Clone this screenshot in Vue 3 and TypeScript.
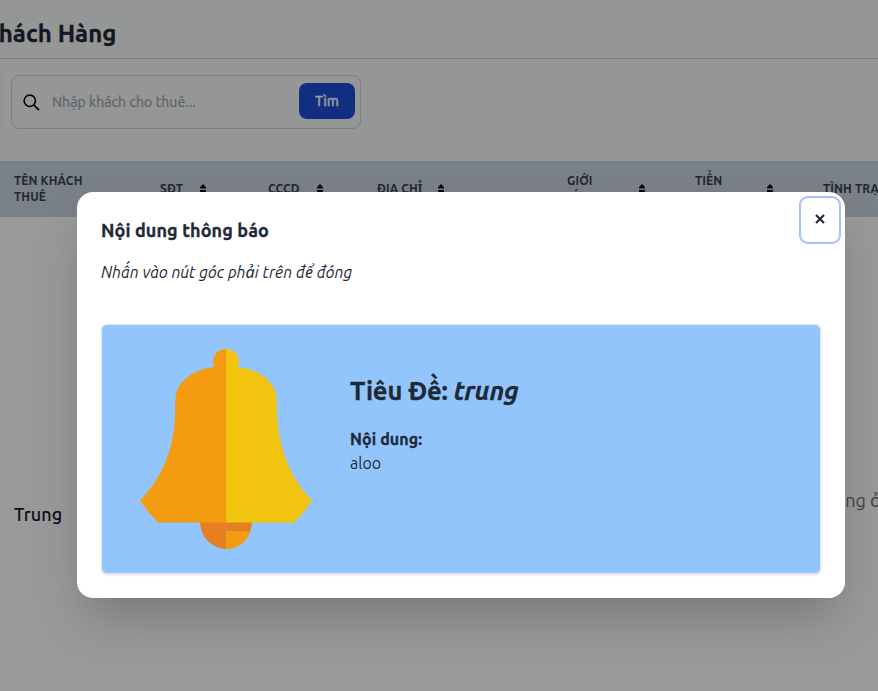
<script setup lang="ts">
import { ref } from 'vue'

interface Column {
  key: string
  lines: string[]
  sortable: boolean
}

const columns: Column[] = [
  { key: 'name', lines: ['TÊN KHÁCH', 'THUÊ'], sortable: false },
  { key: 'phone', lines: ['SĐT'], sortable: true },
  { key: 'cccd', lines: ['CCCD'], sortable: true },
  { key: 'address', lines: ['ĐỊA CHỈ'], sortable: true },
  { key: 'gender', lines: ['GIỚI', 'TÍNH'], sortable: true },
  { key: 'deposit', lines: ['TIỀN', 'CỌC'], sortable: true },
  { key: 'status', lines: ['TÌNH TRẠNG'], sortable: false },
]

const keyword = ref('')
const open = ref(true)
</script>

<template>
  <div class="screen">
    <div class="page">
      <header class="page-head"><h1><span>Khách Hàng</span></h1></header>
      <div class="toolbar">
        <div class="stub"></div>
        <form class="search" @submit.prevent>
          <svg class="lens" viewBox="0 0 18 18" fill="none" stroke="#000" stroke-width="1.7">
            <circle cx="7.2" cy="7.2" r="6" />
            <path d="M11.6 11.8 17 17" stroke-width="2" />
          </svg>
          <input v-model="keyword" placeholder="Nhập khách cho thuê..." />
          <button type="submit">Tìm</button>
        </form>
      </div>
      <div class="thead">
        <div v-for="c in columns" :key="c.key" class="th" :class="c.key">
          <div class="label"><span v-for="l in c.lines" :key="l">{{ l }}</span></div>
          <svg v-if="c.sortable" class="sort" viewBox="0 0 6 11">
            <path d="M3 0 6 3.2V4.4H0V3.2ZM0 6H6V7.4L3 10.6 0 7.4Z" />
          </svg>
        </div>
      </div>
      <div class="row">
        <strong>Trung</strong>
        <span class="state">Đang ở</span>
      </div>
    </div>

    <div v-if="open" class="overlay">
      <section class="modal" role="dialog">
        <button class="close" aria-label="Đóng" @click="open = false">
          <svg viewBox="0 0 10 10" stroke="#1f2937" stroke-width="2.2"><path d="M1 1 9 9M9 1 1 9" /></svg>
        </button>
        <h3>Nội dung thông báo</h3>
        <p class="hint">Nhấn vào nút góc phải trên để đóng</p>
        <article class="card">
          <svg class="bell" viewBox="0 0 172 201">
            <path fill="#e67e22" d="M60 172H112A26 28 0 0 1 60 172Z" />
            <path fill="#f39c12" d="M86 182H110.500C107 193 98 200 86 200Z" />
            <path fill="#f39c12" d="M86 0C78 0 73 6 73 12.500Q73 15 74 18C54 20 36 33 35.500 49L35 63C35 103 18 134 0 151Q7 163 18 173.500H86Z" />
            <path fill="#f1c40f" d="M86 0C94 0 99 6 99 12.500Q99 15 98 18C118 20 136 33 136.500 49L137 63C138 103 154 134 172 151Q165 163 154 173.500H86Z" />
          </svg>
          <div class="info">
            <h2>Tiêu Đề: <em>trung</em></h2>
            <strong>Nội dung:</strong>
            <p>aloo</p>
          </div>
        </article>
      </section>
    </div>
  </div>
</template>

<style>
body {
  margin: 0;
  overflow: hidden;
}
</style>

<style scoped>
* {
  box-sizing: border-box;
}
.screen {
  position: relative;
  width: 878px;
  height: 691px;
  overflow: hidden;
  font-family: Ubuntu, 'Noto Sans', 'Open Sans', sans-serif;
  color: #1f2937;
}
h1, h2, h3, p {
  margin: 0;
}
h1, h2, h3, .info strong, .search button {
  -webkit-text-stroke: 0.3px currentColor;
}
.page {
  height: 691px;
  background: #fff;
  display: flex;
  flex-direction: column;
}
.page-head {
  height: 59px;
  flex: none;
  background: #f9fafb;
  border-bottom: 1px solid #d1d5db;
  padding-top: 18px;
}
h1 {
  width: 116.500px;
  display: flex;
  justify-content: flex-end;
  white-space: nowrap;
  font-size: 24px;
  line-height: 32px;
  letter-spacing: 0.06px;
}
.toolbar {
  height: 102px;
  flex: none;
  background: #f9fafb;
  display: flex;
  gap: 8px;
  padding-top: 16px;
}
.stub {
  width: 3px;
  height: 54px;
  background: #f3f4f6;
}
.search {
  width: 350px;
  height: 54px;
  border: 1px solid #d1d5db;
  border-radius: 8px;
  display: flex;
  align-items: center;
  padding: 0 5px 0 11px;
}
.lens {
  width: 17px;
  height: 17px;
}
.search input {
  flex: 1;
  min-width: 0;
  border: 0;
  outline: 0;
  padding: 0 0 0 12px;
  background: transparent;
  font: 14px/20px Ubuntu, 'Noto Sans', sans-serif;
  letter-spacing: 0.08px;
}
.search input::placeholder {
  color: #9ca3af;
  opacity: 1;
  -webkit-text-stroke: 0.2px #9ca3af;
}
.search button {
  width: 56px;
  height: 36px;
  margin-bottom: 2px;
  padding: 0;
  border: 0;
  border-radius: 8px;
  background: #1d4ed8;
  color: #fff;
  font: 500 14px/20px Ubuntu, 'Noto Sans', sans-serif;
}
.thead {
  height: 56px;
  flex: none;
  background: #cbd5e1;
  display: grid;
  grid-template-columns: 146px 108px 109px 190px 128px 128px 120px;
  padding-left: 14px;
  align-items: center;
  font-size: 12px;
  line-height: 16px;
  font-weight: 700;
  color: #374151;
  letter-spacing: 0.12px;
}
.th {
  display: flex;
  align-items: center;
  white-space: nowrap;
}
.label {
  display: flex;
  flex-direction: column;
}
.phone .label { width: 40px; }
.cccd .label { width: 49px; }
.address .label { width: 61px; }
.gender .label, .deposit .label { width: 72px; }
.sort {
  width: 6px;
  height: 11px;
}
.row {
  display: flex;
  justify-content: space-between;
  align-items: flex-start;
  padding: 283px 0 0 14px;
  font-size: 18px;
  line-height: 28px;
}
.row strong {
  font-weight: 500;
  color: #111827;
  letter-spacing: 0.1px;
}
.state {
  width: 55px;
  margin-top: -14px;
  white-space: nowrap;
  color: #6b7280;
}
.overlay {
  position: absolute;
  inset: 0;
  display: flex;
  justify-content: center;
  align-items: flex-start;
  padding: 192px 0 0 44px;
  background: rgba(0, 0, 0, 0.4);
}
.modal {
  position: relative;
  width: 768px;
  height: 406px;
  padding: 24px;
  border-radius: 16px;
  background: #fff;
  box-shadow: 0 25px 50px -12px rgba(0, 0, 0, 0.25);
}
.close {
  position: absolute;
  top: 4px;
  right: 4px;
  width: 42px;
  height: 48px;
  padding: 0 0 2px;
  display: grid;
  place-items: center;
  border: 2px solid #a4c1fb;
  border-radius: 9px;
  background: #fff;
}
.close svg {
  width: 10px;
  height: 10px;
}
h3 {
  font-size: 18px;
  line-height: 28px;
  letter-spacing: 0.1px;
}
.hint {
  padding-top: 16px;
  font-size: 16px;
  line-height: 24px;
  font-style: italic;
  letter-spacing: 0.06px;
  white-space: nowrap;
}
.card {
  height: 250px;
  margin-top: 40px;
  padding: 24px 38px;
  display: flex;
  gap: 38px;
  border: 1px solid #e5e7eb;
  border-radius: 6px;
  background: #93c5fd;
  box-shadow: 0 1px 3px rgba(0, 0, 0, 0.1), 0 1px 2px -1px rgba(0, 0, 0, 0.1);
}
.bell {
  width: 172px;
  height: 201px;
  flex: none;
}
.info {
  padding-top: 25px;
  font-size: 16px;
  line-height: 24px;
}
.info strong {
  letter-spacing: 0.08px;
}
h2 {
  margin-bottom: 19px;
  font-size: 25.6px;
  line-height: 34px;
  letter-spacing: -0.15px;
  white-space: nowrap;
}
</style>
